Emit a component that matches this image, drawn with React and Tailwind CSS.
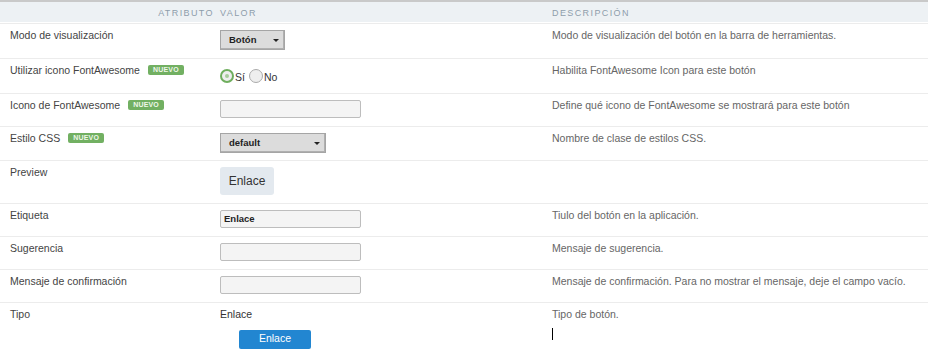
import React from 'react'

const Badge = () => (
  <span className="ml-[8px] inline-block rounded-[2px] bg-[#72b062] px-[5px] text-[7px] font-bold leading-[10px] tracking-[0.2px] text-[#eef7ea]">
    NUEVO
  </span>
)

const Select = ({ value, width }) => (
  <div
    className={`flex h-[20px] items-stretch border border-[#a5a5a5] bg-[#dcdcdc] text-[9.5px] font-bold text-[#222] shadow-[inset_-1px_-1px_0_#b0b0b0] ${width}`}
  >
    <span className="flex flex-1 items-center pl-[8px]">{value}</span>
    <span className="flex w-[16px] items-center justify-center">
      <span className="h-0 w-0 border-x-[3px] border-t-[3px] border-x-transparent border-t-[#222]" />
    </span>
  </div>
)

const Input = ({ value }) => (
  <div className="flex h-[18px] w-[141px] items-center rounded-[2px] border border-[#bdbdbd] bg-[#f4f4f4] pl-[3px] text-[9.5px] font-bold text-[#222]">
    {value}
  </div>
)

const Radio = ({ checked, label }) => (
  <span className="inline-flex items-end">
    <span
      className={`relative inline-block h-[14px] w-[14px] rounded-full bg-[#eee] ${
        checked ? 'border-2 border-[#6fae5e]' : 'border border-[#aaa]'
      }`}
    >
      {checked && <span className="absolute left-[3px] top-[3px] h-[4px] w-[4px] rounded-full bg-[#a6cb9a]" />}
    </span>
    <span className="ml-[1px] translate-y-[3px] text-[10.5px] text-[#333]">{label}</span>
  </span>
)

const rows = [
  {
    label: 'Modo de visualización',
    h: 'h-[35px]',
    value: <Select value="Botón" width="w-[65px]" />,
    desc: 'Modo de visualización del botón en la barra de herramientas.',
  },
  {
    label: 'Utilizar icono FontAwesome',
    badge: true,
    h: 'h-[35px]',
    value: (
      <div className="flex gap-[4px] pt-[2px]">
        <Radio checked label="Sí" />
        <Radio label="No" />
      </div>
    ),
    desc: 'Habilita FontAwesome Icon para este botón',
  },
  {
    label: 'Icono de FontAwesome',
    badge: true,
    h: 'h-[33px]',
    value: <Input />,
    desc: 'Define qué icono de FontAwesome se mostrará para este botón',
  },
  {
    label: 'Estilo CSS',
    badge: true,
    h: 'h-[34px]',
    value: <Select value="default" width="w-[106px]" />,
    desc: 'Nombre de clase de estilos CSS.',
  },
  {
    label: 'Preview',
    h: 'h-[43px]',
    value: (
      <div className="flex h-[28px] w-[54px] items-center justify-center rounded-[3px] bg-[#e3e9ef] text-[12px] text-[#333]">
        Enlace
      </div>
    ),
    desc: '',
  },
  { label: 'Etiqueta', h: 'h-[33px]', value: <Input value="Enlace" />, desc: 'Tiulo del botón en la aplicación.' },
  { label: 'Sugerencia', h: 'h-[33px]', value: <Input />, desc: 'Mensaje de sugerencia.' },
  {
    label: 'Mensaje de confirmación',
    h: 'h-[33px]',
    value: <Input />,
    desc: 'Mensaje de confirmación. Para no mostrar el mensaje, deje el campo vacío.',
  },
]

export default function App() {
  return (
    <div className="h-[350px] w-[928px] overflow-hidden bg-white font-['Liberation_Sans',Arial,sans-serif] text-[10.5px]">
      {/* header */}
      <div className="grid h-[22px] grid-cols-[220px_332px_1fr] border-t-2 border-[#c9c9c9] bg-[#edf1f4] text-[9px] uppercase tracking-[1.4px] text-[#8d9dab]">
        <div className="pr-[6px] pt-[5px] text-right">Atributo</div>
        <div className="pt-[5px]">Valor</div>
        <div className="pt-[5px]">Descripción</div>
      </div>
      <div className="h-[1px] bg-white" />

      {rows.map((r) => (
        <div key={r.label} className={`grid grid-cols-[220px_332px_1fr] border-t border-[#ececec] ${r.h}`}>
          <div className="flex items-start pl-[10px] pt-[6px] text-[#444]">
            <span className="-mt-[2px]">{r.label}</span>
            {r.badge && <Badge />}
          </div>
          <div className="pt-[6px]">{r.value}</div>
          <div className="pt-[4px] text-[#666]">{r.desc}</div>
        </div>
      ))}

      <div className="grid h-[48px] grid-cols-[220px_332px_1fr] border-t border-[#ececec]">
        <div className="pl-[10px] pt-[4px] text-[#444]">Tipo</div>
        <div className="pt-[4px] text-[#333]">
          <div>Enlace</div>
          <div className="ml-[19px] mt-[7px] flex h-[19px] w-[72px] items-center justify-center rounded-[2px] bg-[#2286d1] text-white">
            Enlace
          </div>
        </div>
        <div className="pt-[4px] text-[#666]">
          <div>Tipo de botón.</div>
          <div className="mt-[5px] h-[12px] w-[1px] bg-black" />
        </div>
      </div>
    </div>
  )
}
